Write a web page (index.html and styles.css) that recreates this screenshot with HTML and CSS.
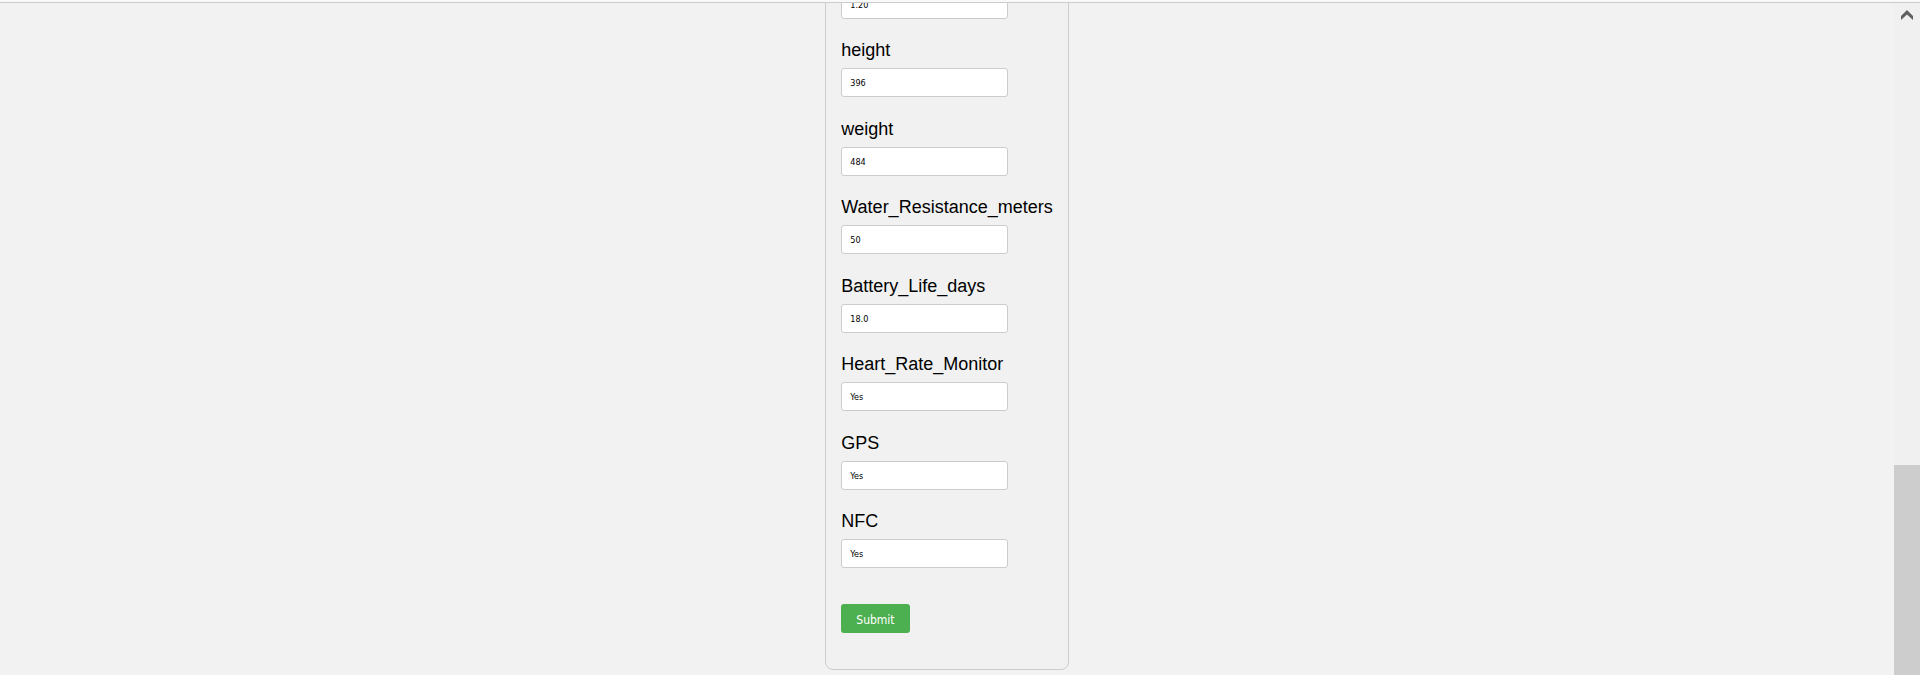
FILE: index.html
```
<!DOCTYPE html>
<html lang="en">
<head>
<meta charset="utf-8">
<title>Smartwatch details</title>
<link rel="stylesheet" href="styles.css">
</head>
<body>
<main class="viewport">
  <form class="card">
    <div class="field"><input type="text" aria-label="Display size" value="1.20"></div>
    <div class="field"><label for="height">height</label><input id="height" type="text" value="396"></div>
    <div class="field"><label for="weight">weight</label><input id="weight" type="text" value="484"></div>
    <div class="field"><label for="water">Water_Resistance_meters</label><input id="water" type="text" value="50"></div>
    <div class="field"><label for="battery">Battery_Life_days</label><input id="battery" type="text" value="18.0"></div>
    <div class="field"><label for="heart">Heart_Rate_Monitor</label><input id="heart" type="text" value="Yes"></div>
    <div class="field"><label for="gps">GPS</label><input id="gps" type="text" value="Yes"></div>
    <div class="field"><label for="nfc">NFC</label><input id="nfc" type="text" value="Yes"></div>
    <button class="submit" type="submit">Submit</button>
  </form>
</main>
<div class="scrollbar" aria-hidden="true">
  <svg class="arrow" width="12" height="10" viewBox="0 0 12 10"><path d="M0 6 6 0l6 6v4L6 4.500 0 10z" fill="#606060"/></svg>
  <div class="thumb"></div>
</div>
</body>
</html>
```
FILE: styles.css
```
* {
  box-sizing: border-box;
}

body {
  margin: 0;
  height: 100vh;
  display: flex;
  overflow: hidden;
  border-top: 2px solid #f9f9fb;
  background: #f2f2f2;
  font-family: "Liberation Sans", Arial, sans-serif;
}

.viewport {
  flex: 1;
  display: flex;
  flex-direction: column;
  justify-content: flex-end;
  align-items: center;
  overflow: hidden;
  padding-bottom: 5px;
  border-top: 1px solid #ccc;
}

.card {
  display: flex;
  flex-direction: column;
  align-items: flex-start;
  padding: 16px 15px 36px;
  border: 1px solid #ccc;
  border-radius: 8px;
  background: #f1f1f1;
}

.field {
  display: flex;
  flex-direction: column;
  align-items: flex-start;
  gap: 7px;
  margin-bottom: 21px;
}

.field:nth-child(even) {
  margin-bottom: 22px;
}

.field label {
  font-size: 18px;
  line-height: 21px;
  color: #000;
}

.field input {
  width: 167px;
  height: 29px;
  padding: 1px 8px 0;
  border: 1px solid #ccc;
  border-radius: 3px;
  background: #fff;
  color: #000;
  font: 9px "DejaVu Sans Condensed", Tahoma, sans-serif;
}

.submit {
  height: 29px;
  margin-top: 14px;
  padding: 2px 15px 0;
  border: 0;
  border-radius: 3px;
  background: #4caf50;
  color: #fff;
  font: 12px "DejaVu Sans Condensed", Tahoma, sans-serif;
}

.scrollbar {
  flex: none;
  width: 26px;
  display: flex;
  flex-direction: column;
  align-items: center;
  justify-content: space-between;
  padding-top: 7px;
  border-top: 1px solid #ccc;
  background: #f0f0f0;
}

.arrow {
  display: block;
}

.thumb {
  width: 100%;
  height: 210px;
  background: #cdcdcd;
}
```
